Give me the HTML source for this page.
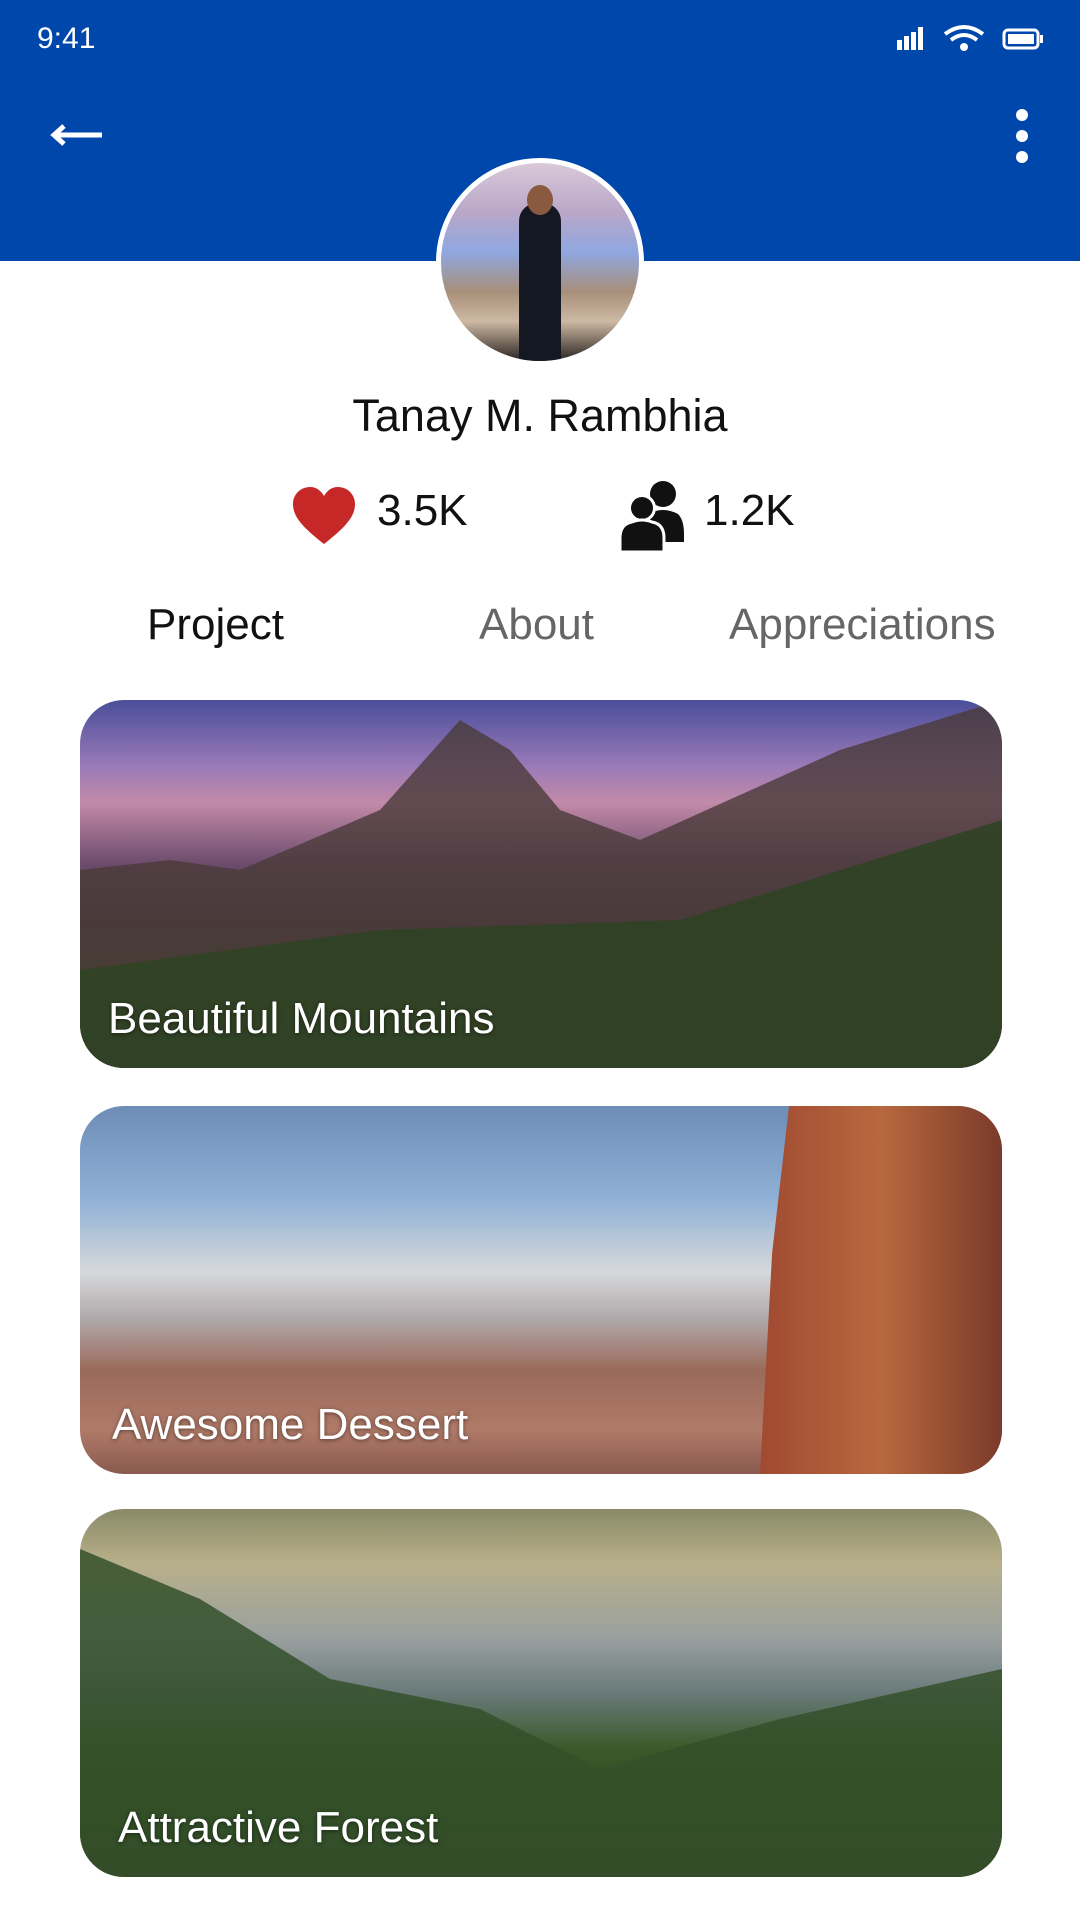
<!DOCTYPE html>
<html><head><meta charset="utf-8"><style>
*{margin:0;padding:0;box-sizing:border-box}
body{width:1080px;height:1920px;background:#fff;position:relative;overflow:hidden;font-family:"Liberation Sans",sans-serif}
.hdr{position:absolute;left:0;top:0;width:1080px;height:261px;background:#0047ab}
.time{position:absolute;left:37px;top:22px;color:#fff;font-size:30px}
.avatar{position:absolute;left:436px;top:158px;width:208px;height:208px;border-radius:50%;border:5px solid #fff;overflow:hidden;background:linear-gradient(180deg,#d9c9d8 0%,#b9a7c8 25%,#8fa7e0 45%,#a88f7a 65%,#cdb9a4 80%,#2a2420 100%)}
.name{position:absolute;left:0;width:1080px;top:390px;text-align:center;font-size:45px;color:#111}
.stat{position:absolute;top:486px;font-size:44px;color:#111}
.tab{position:absolute;top:600px;font-size:44px;color:#666}
.card{position:absolute;left:80px;width:922px;height:368px;border-radius:44px;overflow:hidden}
.card span{position:absolute;left:28px;bottom:24px;color:#fff;font-size:44px;text-shadow:0 1px 4px rgba(0,0,0,.5)}
</style></head><body>
<div class="hdr"></div>
<div class="time">9:41</div>
<svg style="position:absolute;left:895px;top:24px" width="150" height="30" viewBox="0 0 150 30">
<rect x="2" y="16" width="5" height="10" fill="#fff"/><rect x="9" y="12" width="5" height="14" fill="#fff"/><rect x="16" y="8" width="5" height="18" fill="#fff"/><rect x="23" y="3" width="5" height="23" fill="#fff"/>
<path d="M50 10 Q69 -4 88 10" stroke="#fff" stroke-width="4" fill="none"/><path d="M56 16 Q69 6 82 16" stroke="#fff" stroke-width="4" fill="none"/><circle cx="69" cy="23" r="4" fill="#fff"/>
<rect x="109" y="6" width="34" height="18" rx="4" stroke="#fff" stroke-width="3" fill="none"/><rect x="113" y="10" width="26" height="10" fill="#fff"/><rect x="145" y="11" width="3" height="8" fill="#fff"/>
</svg>
<svg style="position:absolute;left:50px;top:122px" width="54" height="26" viewBox="0 0 54 26"><path d="M52 13H6M14 4L4 13L14 22" stroke="#fff" stroke-width="5" fill="none"/></svg>
<svg style="position:absolute;left:1012px;top:108px" width="20" height="56"><circle cx="10" cy="7" r="6" fill="#fff"/><circle cx="10" cy="28" r="6" fill="#fff"/><circle cx="10" cy="49" r="6" fill="#fff"/></svg>
<div class="avatar"><div style="position:absolute;left:78px;top:40px;width:42px;height:160px;background:#141822;border-radius:18px 18px 4px 4px"></div><div style="position:absolute;left:86px;top:22px;width:26px;height:30px;background:#8a5a40;border-radius:50%"></div></div>
<div class="name">Tanay M. Rambhia</div>
<svg style="position:absolute;left:291px;top:486px" width="66" height="60" viewBox="0 0 66 60"><path d="M33 58C10 40 2 30 2 18C2 8 10 1 19 1C26 1 30 5 33 10C36 5 40 1 47 1C56 1 64 8 64 18C64 30 56 40 33 58Z" fill="#c62828"/></svg>
<div class="stat" style="left:377px">3.5K</div>
<svg style="position:absolute;left:618px;top:478px" width="66" height="74" viewBox="0 0 66 74"><circle cx="45" cy="16" r="13" fill="#111"/><path d="M30 36Q45 28 60 36Q66 42 66 56L66 64L40 64Z" fill="#111"/><circle cx="24" cy="30" r="14" fill="#fff"/><circle cx="24" cy="30" r="11" fill="#111"/><path d="M2 74L2 60Q2 46 14 44Q24 40 34 44Q46 46 46 60L46 74Z" fill="#111" stroke="#fff" stroke-width="3"/></svg>
<div class="stat" style="left:704px">1.2K</div>
<div class="tab" style="left:147px;color:#111">Project</div>
<div class="tab" style="left:479px">About</div>
<div class="tab" style="left:729px">Appreciations</div>
<div class="card" style="top:700px;background:linear-gradient(180deg,#4a4e9a 0%,#9a7ab8 18%,#c28aa8 28%,#6a4a6a 45%,#4a3a3a 60%,#3a4a2a 78%,#2a3a1e 100%)"><svg width="922" height="368" style="position:absolute;left:0;top:0"><path d="M0 170L90 160L160 170L230 140L300 110L380 20L430 50L480 110L560 140L760 50L922 0L922 368L0 368Z" fill="#4a3b3a" opacity=".8"/><path d="M0 270L300 230L600 220L922 120L922 368L0 368Z" fill="#2f4324" opacity=".9"/></svg><span>Beautiful Mountains</span></div>
<div class="card" style="top:1106px;background:linear-gradient(180deg,#6d8cb6 0%,#8eb0d6 25%,#d6d8da 45%,#b0a8aa 58%,#9a6a5a 72%,#b07a68 88%,#8a5a50 100%)"><div style="position:absolute;left:680px;top:0;width:242px;height:368px;background:linear-gradient(90deg,#a04a32,#b8683e,#7a3a2a);clip-path:polygon(12% 0,100% 0,100% 100%,0 100%,5% 40%)"></div><span style="left:32px">Awesome Dessert</span></div>
<div class="card" style="top:1509px;background:linear-gradient(180deg,#8a8a68 0%,#b8b08a 15%,#9aa0a0 35%,#6a7a7a 50%,#3a5a2a 65%,#2a4a1e 85%,#3a3a20 100%)"><svg width="922" height="368" style="position:absolute;left:0;top:0"><path d="M0 40L120 90L250 170L400 200L520 260L700 210L922 160L922 368L0 368Z" fill="#34502a" opacity=".85"/></svg><span style="left:38px">Attractive Forest</span></div>
</body></html>
